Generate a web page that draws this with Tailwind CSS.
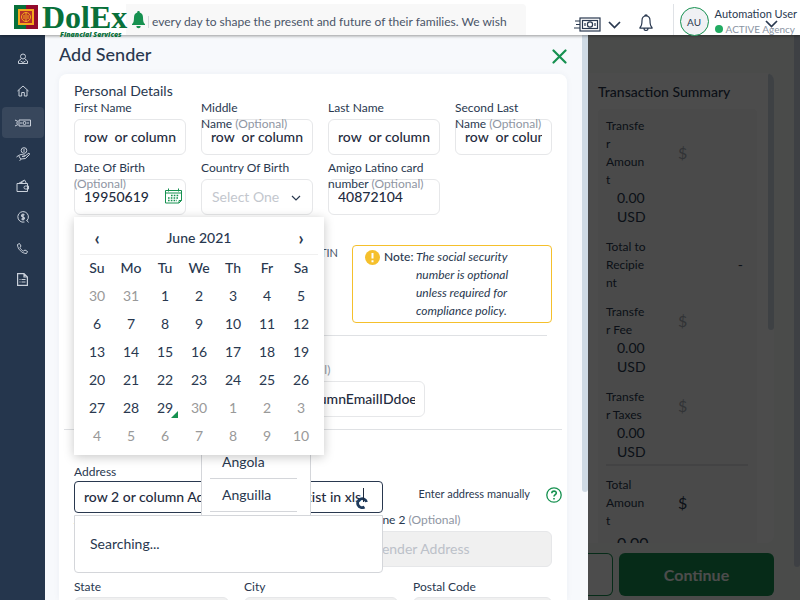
<!DOCTYPE html>
<html lang="en">
<head>
<meta charset="utf-8">
<meta name="viewport" content="width=device-width, initial-scale=1">
<title>Add Sender</title>
<script src="https://cdn.jsdelivr.net/npm/@tailwindcss/browser@4"></script>
</head>
<body class="flex h-screen flex-col overflow-hidden bg-[#f7f9fc] font-['Lato',sans-serif] text-[12px] leading-4 text-[#29384f]">

<header class="relative z-20 flex h-[35px] shrink-0 bg-white shadow-[0_1px_3px_rgba(0,0,0,0.4)]">
  <a href="#" class="relative ml-[14px] flex w-[112px] shrink-0 items-start pt-1" aria-label="DolEx Financial Services">
    <svg class="mt-px h-6 w-6 shrink-0" viewBox="0 0 24 24">
      <rect width="12" height="24" fill="#08703a"/><rect x="12" width="12" height="24" fill="#930b2c"/>
      <rect x="4" y="4" width="16" height="16" fill="#f5a81c"/><rect x="6" y="6" width="12" height="12" fill="#b5302a"/>
      <g fill="none" stroke="#f5a81c"><circle cx="12" cy="12" r="4.5"/><path d="M12 7v10M10 10v4M14 10v4"/></g>
    </svg>
    <span class="ml-[4px] mt-px font-['Liberation_Serif',serif] text-[32px] font-bold leading-6 text-[#08703a]">DolEx</span>
    <span class="absolute left-[46px] top-[30px] z-10 whitespace-nowrap font-['Open_Sans',sans-serif] text-[7px] font-extrabold italic leading-[10px] text-[#08703a]">Financial Services</span>
  </a>
  <div class="mt-1 flex w-[400px] items-center gap-[3px] rounded-tr bg-[#f8f8f8] pl-[6px]">
    <svg class="h-[18px] w-[13px] shrink-0" viewBox="0 0 13 18" fill="#169150"><path d="M6.500 0a1.200 1.200 0 0 1 1.200 1.500C10 2 11 4 11 6.500c0 4 .7 5.500 2 6.500v1H0v-1c1.300-1 2-2.500 2-6.500C2 4 3 2 5.300 1.500A1.200 1.200 0 0 1 6.500 0ZM4.300 15h4.400a2.200 2.200 0 0 1-4.400 0Z"/></svg>
    <p class="mt-1 whitespace-nowrap border-l border-[#d5d8dc] pl-[3px] text-[12px] leading-3 text-[#4a5568]">every day to shape the present and future of their families. We wish</p>
  </div>
  <div class="ml-auto flex items-stretch">
    <button class="flex items-center gap-[6px] pt-[14px]" aria-label="Quick send">
      <svg class="h-4 w-7" viewBox="0 0 28 16" fill="none" stroke="#29384f" stroke-width="1.200"><rect x="6" y="1" width="20" height="13"/><rect x="8.500" y="3.500" width="15" height="8"/><circle cx="16" cy="7.500" r="2.600" fill="#fff"/><path d="M1 4h5M2 7.500h4M0 11h6M11 6v3M21 6v3"/></svg>
      <svg class="h-3 w-[13px]" viewBox="0 0 13 12" fill="none" stroke="#29384f" stroke-width="1.700"><path d="m1 3 5.500 5.500L12 3"/></svg>
    </button>
    <button class="ml-[18px] pt-2" aria-label="Notifications">
      <svg class="h-[18px] w-[14px]" viewBox="0 0 14 18" fill="none" stroke="#29384f" stroke-width="1.200"><path d="M1 14.500c1.500-1.300 2-3 2-7C3 4.500 4.500 3 7 3s4 1.500 4 4.500c0 4 .500 5.700 2 7v.700H1ZM5.800 3a1.200 1.200 0 1 1 2.400 0M5 15.500a2 2 0 0 0 4 0"/></svg>
    </button>
    <div class="ml-5 mt-1 border-l border-[#dfe2e6]"></div>
    <button class="relative flex gap-[6px] pl-[6px] pr-[3px] pt-[7px] text-left">
      <span class="flex h-[29px] w-[29px] items-center justify-center rounded-full border border-[#169150] bg-[#f0f1f4] text-[10px]">AU</span>
      <span class="text-[11px] leading-[14px]">Automation User
        <span class="flex items-center gap-[3px] text-[10px] leading-4 text-[#8a94a3]"><i class="h-2 w-2 rounded-full bg-[#22ab62]"></i>ACTIVE Agency</span>
      </span>
      <svg class="absolute right-[22px] top-[18px] h-3 w-[13px]" viewBox="0 0 13 12" fill="none" stroke="#29384f" stroke-width="1.700"><path d="m1 3 5.500 5.500L12 3"/></svg>
    </button>
  </div>
</header>

<div class="grid min-h-0 flex-1 grid-cols-[45px_minmax(0,543fr)_minmax(0,212fr)] grid-rows-[minmax(0,1fr)]">
  <nav class="flex flex-col items-center bg-[#25364d] pt-2 text-[#c9d0da]" aria-label="Main">
    <a href="#" aria-label="Profile" class="flex h-8 w-[42px] items-center justify-center"><svg class="h-3 w-3" viewBox="0 0 12 12" fill="none" stroke="currentColor"><circle cx="6" cy="3.500" r="2.500"/><path d="M4 6 1.500 8v2.500h9V8L8 6M3.500 8 6 9.500 8.500 8"/></svg></a>
    <a href="#" aria-label="Home" class="flex h-8 w-[42px] items-center justify-center"><svg class="h-3 w-3" viewBox="0 0 12 12" fill="none" stroke="currentColor"><path d="m.500 6 5.500-5 5.500 5M2 5v6h2.700V7.500h2.600V11H10V5"/></svg></a>
    <a href="#" aria-label="Send money" class="flex h-[31px] w-[42px] items-center justify-center rounded bg-[#38475c]"><svg class="h-[10px] w-4" viewBox="0 0 16 10" fill="none" stroke="currentColor"><path d="M4 2h11.500v6H4ZM0 2l3 1.500M1 5h2M0 8l3-1.500"/><circle cx="9.500" cy="5" r="1.500"/><path d="M6 4v2M13 4v2"/></svg></a>
    <a href="#" aria-label="Payout" class="flex h-8 w-[42px] items-center justify-center"><svg class="h-[14px] w-[14px]" viewBox="0 0 14 14" fill="none" stroke="currentColor"><circle cx="8" cy="3.500" r="2.800"/><path d="M8 2v3M.500 10l2-1.500 2.500 4-1.500 1M2.500 8.500 5 7.500l4 .700-.500 1.500-2.500-.200M9 9l4-3 .500 1.500-4 4-4.500.500"/></svg></a>
    <a href="#" aria-label="Wallet" class="flex h-[31px] w-[42px] items-center justify-center"><svg class="h-[13px] w-[13px]" viewBox="0 0 13 13" fill="none" stroke="currentColor"><path d="M1 4.500h10.500v8H1ZM2.500 4.500l6-3.500 2 3.500M4.500 4 7.500 2.500"/><path d="M12.500 7H9.500a1.400 1.400 0 0 0 0 3h3Z"/></svg></a>
    <a href="#" aria-label="Rates" class="flex h-[31px] w-[42px] items-center justify-center"><svg class="h-3 w-3" viewBox="0 0 12 12" fill="none" stroke="currentColor"><path d="M10 9.500A5.300 5.300 0 1 0 7.500 11M9.500 9l2 2.500"/><path stroke-width="1.200" d="M7.500 4c-1-.800-3-.500-3 .700S7.500 6 7.500 7.200s-2 1.500-3 .600M6 2.500v7"/></svg></a>
    <a href="#" aria-label="Calls" class="flex h-8 w-[42px] items-center justify-center"><svg class="h-[11px] w-[11px]" viewBox="0 0 11 11" fill="none" stroke="currentColor"><path d="M2.500.500 4 3 3 4.500C3.500 6 5 7.500 6.500 8L8 7l2.500 1.500-1 2C5 10.500.500 6 .500 1.500Z"/></svg></a>
    <a href="#" aria-label="Reports" class="flex h-[31px] w-[42px] items-center justify-center"><svg class="h-[13px] w-[11px]" viewBox="0 0 11 13" fill="none" stroke="currentColor" stroke-width="1.200"><path d="M.600.600h6.400l3.400 3.400v8.400H.600ZM7 .600V4h3.400M2.500 6.500h1M4.500 6.500h4M2.500 9h1M4.500 9h4"/></svg></a>
  </nav>

  <main class="relative flex flex-col overflow-hidden pl-[14px] pr-[21px]">
    <div class="absolute right-0 top-0 h-[457px] w-[6px] rounded-b bg-[#cfdae4]"></div>
    <div class="flex h-[39px] shrink-0 items-center justify-between">
      <h1 class="pb-[2px] text-[18px] font-medium leading-6">Add Sender</h1>
      <button aria-label="Close"><svg class="mt-1 h-[15px] w-[15px]" viewBox="0 0 15 15" fill="none" stroke="#169150" stroke-width="2.200" stroke-linecap="round"><path d="m1.500 1.500 12 12M13.500 1.500l-12 12"/></svg></button>
    </div>
    <form class="min-h-0 flex-1 rounded-t-lg bg-white px-[15px] pt-2 shadow-[0_0_6px_rgba(40,60,90,0.05)]">
      <h2 class="text-[14px] leading-[17px]">Personal Details</h2>
      <div class="relative grid grid-cols-[repeat(3,minmax(0,112fr))_minmax(0,97fr)] gap-x-[15px] gap-y-1">
        <div><label for="fn" class="block h-5 pt-px">First Name</label><input id="fn" value="row  or column Name" class="block h-9 w-full rounded-md border border-[#e6e7e9] px-[9px] pb-[2px] text-[14px] font-medium text-[#1f2c40]"></div>
        <div><label for="mn" class="relative block h-5 pt-px">Middle<br>Name <span class="text-[#8f96a3]">(Optional)</span></label><input id="mn" value="row  or column Name" class="block h-9 w-full rounded-md border border-[#e6e7e9] px-[9px] pb-[2px] text-[14px] font-medium text-[#1f2c40]"></div>
        <div><label for="ln" class="block h-5 pt-px">Last Name</label><input id="ln" value="row  or column Name" class="block h-9 w-full rounded-md border border-[#e6e7e9] px-[9px] pb-[2px] text-[14px] font-medium text-[#1f2c40]"></div>
        <div><label for="sn" class="relative block h-5 pt-px">Second Last<br>Name <span class="text-[#8f96a3]">(Optional)</span></label><input id="sn" value="row  or column Name" class="block h-9 w-full rounded-md border border-[#e6e7e9] px-[9px] pb-[2px] text-[14px] font-medium text-[#1f2c40]"></div>
        <div class="relative"><label for="dob" class="relative block h-5 pt-px">Date Of Birth<br><span class="text-[#8f96a3]">(Optional)</span></label><input id="dob" value="19950619" class="block h-9 w-full rounded-md border border-[#e6e7e9] px-[9px] pb-[2px] text-[14px] font-medium text-[#1f2c40]">
          <svg class="absolute bottom-[11px] right-1 h-4 w-[17px]" viewBox="0 0 17 16" fill="none" stroke="#169150"><path d="M.500 2.500h16v10l-2.500 2.500H.500ZM.500 5h16M3.500.500v3M13.500.500v3M14 15v-2.500h2.500"/><path stroke-width="1.600" stroke-dasharray="1.600 1.200" d="M6 7.500h8M3 10h11M3 12.500h9"/></svg>
        </div>
        <div><label for="cob" class="block h-5 pt-px">Country Of Birth</label>
          <div class="relative"><select id="cob" class="block h-9 w-full appearance-none rounded-md border border-[#e6e7e9] bg-white px-[10px] text-[14px] text-[#c3c7ce]"><option>Select One</option></select>
          <svg class="pointer-events-none absolute right-3 top-4 h-[6px] w-[10px]" viewBox="0 0 10 6" fill="none" stroke="#29384f" stroke-width="1.200"><path d="m1 1 4 4 4-4"/></svg></div>
        </div>
        <div><label for="card" class="relative block h-5 whitespace-nowrap pt-px">Amigo Latino card<br>number <span class="text-[#8f96a3]">(Optional)</span></label><input id="card" value="40872104" class="block h-9 w-full rounded-md border border-[#e6e7e9] px-[9px] pb-[2px] text-[14px] font-medium text-[#1f2c40]"></div>

        <!-- Date picker -->
        <section class="absolute left-0 top-full z-10 mt-[2px] h-[238px] w-[250px] bg-white px-[6px] shadow-[0_2px_10px_rgba(0,0,0,0.22)]" aria-label="Calendar">
          <div class="flex h-[38px] items-center justify-between border-b border-[#f0f0f0] px-3 pt-1 text-[14px] font-medium">
            <button type="button" class="w-[10px] text-[18px] font-bold leading-4" aria-label="Previous month">‹</button><span>June 2021</span><button type="button" class="w-[10px] text-[18px] font-bold leading-4" aria-label="Next month">›</button>
          </div>
          <table class="-mt-px w-full table-fixed text-center text-[14px] leading-7">
            <thead><tr class="h-7"><th class="font-medium">Su</th><th class="font-medium">Mo</th><th class="font-medium">Tu</th><th class="font-medium">We</th><th class="font-medium">Th</th><th class="font-medium">Fr</th><th class="font-medium">Sa</th></tr></thead>
            <tbody>
              <tr><td class="text-[#999]">30</td><td class="text-[#999]">31</td><td>1</td><td>2</td><td>3</td><td>4</td><td>5</td></tr>
              <tr><td>6</td><td>7</td><td>8</td><td>9</td><td>10</td><td>11</td><td>12</td></tr>
              <tr><td>13</td><td>14</td><td>15</td><td>16</td><td>17</td><td>18</td><td>19</td></tr>
              <tr><td>20</td><td>21</td><td>22</td><td>23</td><td>24</td><td>25</td><td>26</td></tr>
              <tr><td>27</td><td>28</td><td class="relative">29<i class="absolute bottom-1 right-1 border-b-[7px] border-l-[7px] border-b-[#169150] border-l-transparent"></i></td><td class="text-[#999]">30</td><td class="text-[#999]">1</td><td class="text-[#999]">2</td><td class="text-[#999]">3</td></tr>
              <tr class="text-[#999]"><td>4</td><td>5</td><td>6</td><td>7</td><td>8</td><td>9</td><td>10</td></tr>
            </tbody>
          </table>
        </section>
        <!-- Country options -->
        <ul class="absolute left-[127px] top-full z-[5] mt-[2px] flex h-[299px] w-[110px] flex-col justify-end border border-t-0 border-[#d4d6da] bg-white pl-2 pr-[13px] pb-[3px] text-[14px]">
          <li class="h-[33px] border-b border-[#d4d6da] pl-3 leading-8">Angola</li>
          <li class="h-[33px] border-b border-[#d4d6da] pl-3 leading-8">Anguilla</li>
        </ul>
      </div>

      <div class="mt-[30px] flex justify-end gap-[14px]">
        <span class="text-[11px] text-[#4a5568]">TIN</span>
        <div class="flex h-[78px] w-[200px] gap-[4px] rounded-sm border border-[#f5c02c] pl-3 pt-[2px]">
          <svg class="mt-[2px] h-[15px] w-[15px] shrink-0" viewBox="0 0 15 15"><circle cx="7.500" cy="7.500" r="7.500" fill="#f5c02c"/><path d="M7.500 3v5.500M7.500 10.300v2" stroke="#fff" stroke-width="2"/></svg>
          <strong class="w-[28px] shrink-0 font-medium leading-[18px]">Note:</strong>
          <em class="w-[104px] shrink-0 leading-[18px]">The social security number is optional unless required for compliance policy.</em>
        </div>
      </div>
      <hr class="mr-[5px] mt-3 border-[#dfe1e4]">
      <div class="mt-[25px] pl-[170px] pr-[127px]"><label for="em" class="block h-5 pl-[3px] pt-px">Email <span class="text-[#8f96a3]">(Optional)</span></label><input id="em" value="row  or columnEmailIDdoesnotexist" class="block h-9 w-full rounded-md border border-[#e6e7e9] px-[9px] pb-[2px] text-[14px] font-medium text-[#1f2c40]"></div>
      <hr class="-mx-[10px] mt-3 border-[#dfe1e4]">

      <div class="relative mt-[33px]">
        <div class="flex items-end justify-between">
          <div class="w-[309px]"><label for="ad" class="block h-[18px] pt-px">Address</label><input id="ad" value="row 2 or column Address does not exist in xls" class="block h-8 w-full rounded border border-[#29384f] px-[9px] pb-[2px] text-[14px] font-medium text-[#1f2c40]"></div>
          <button type="button" class="-mr-[10px] flex items-center gap-4 pb-[10px] text-[11px]">Enter address manually
            <svg class="mt-[2px] h-4 w-4" viewBox="0 0 16 16" fill="none" stroke="#169150" stroke-width="1.300"><circle cx="8" cy="8" r="7.200"/><path stroke-width="1.600" d="M5.800 6.300c0-3 4.600-2.800 4.500-.200C10.300 7.800 8 7.600 8 9.600M8 11v1.500"/></svg>
          </button>
        </div>
        <svg class="absolute left-[281px] top-6 h-[22px] w-[14px]" viewBox="0 0 14 22" fill="none" stroke="#1f3b5c" stroke-width="2.800"><path d="M9.500 20A4.500 4.500 0 1 1 11.500 15"/><path stroke="#1f2c40" stroke-width="1" d="M8.500 1v14"/></svg>
        <div class="absolute left-0 top-[52px] z-[6] flex h-[58px] w-[309px] items-center rounded-b border border-[#d4d6da] bg-white pl-[15px] text-[14px]" role="status">Searching...</div>
        <div class="-mt-px grid grid-cols-[239fr_224fr] gap-x-[15px]">
          <div><label for="l1" class="block h-[19px]">Address Line 1</label><input id="l1" disabled placeholder="Sender Address" class="block h-9 w-full rounded-md border border-[#e6e7e9] bg-[#f0f0f0] px-[9px] pb-[2px] text-[14px] placeholder:text-[#bcc1c9]"></div>
          <div><label for="l2" class="block h-[19px]">Address Line 2 <span class="text-[#8f96a3]">(Optional)</span></label><input id="l2" disabled placeholder="Enter Sender Address" class="block h-9 w-full rounded-md border border-[#e6e7e9] bg-[#f0f0f0] px-[9px] pb-[2px] text-[14px] placeholder:text-[#bcc1c9]"></div>
        </div>
        <div class="mt-3 grid grid-cols-[155fr_154fr_139fr] gap-x-[15px]">
          <div><label for="st" class="block h-[18px]">State</label><input id="st" disabled class="block h-9 w-full rounded-md border border-[#e6e7e9] bg-[#f0f0f0]"></div>
          <div><label for="ci" class="block h-[18px]">City</label><input id="ci" disabled class="block h-9 w-full rounded-md border border-[#e6e7e9] bg-[#f0f0f0]"></div>
          <div><label for="pc" class="block h-[18px]">Postal Code</label><input id="pc" disabled class="block h-9 w-full rounded-md border border-[#e6e7e9] bg-[#f0f0f0]"></div>
        </div>
      </div>
    </form>
  </main>

  <aside class="relative flex flex-col overflow-hidden bg-[#f7fbf8] pr-[26px] pt-[38px]">
    <div class="absolute right-0 top-0 h-[532px] w-[6px] rounded-b bg-[#cfd8e4]"></div>
    <section class="relative h-[470px] shrink-0 overflow-hidden rounded-r-lg bg-white pl-[10px] pr-[17px] pt-[9px]">
      <div class="absolute right-0 top-0 h-[257px] w-[6px] rounded bg-[#cfdae4]"></div>
      <h2 class="whitespace-nowrap text-[14px] font-medium leading-5">Transaction Summary</h2>
      <div class="mt-[7px] rounded bg-[#f8f8f8] pl-2 pr-[9px] pt-2 text-[12px] leading-[18px]">
        <div class="flex items-center"><div class="w-10 wrap-break-word">Transfer Amount</div><span class="ml-8 text-[16px] opacity-40">$</span></div>
        <p class="-mt-px w-11 pl-[11px] text-[14px] leading-[19px]">0.00 USD</p>
        <div class="mt-3 flex items-center justify-between pr-[5px]"><div class="w-10 wrap-break-word">Total to Recipient</div><span class="text-[14px]">-</span></div>
        <div class="mt-[11px] flex items-center"><div class="w-10 wrap-break-word">Transfer Fee</div><span class="ml-8 text-[16px] opacity-40">$</span></div>
        <p class="-mt-px w-11 pl-[11px] text-[14px] leading-[19px]">0.00 USD</p>
        <div class="mt-3 flex items-center"><div class="w-10 wrap-break-word">Transfer Taxes</div><span class="ml-8 text-[16px] opacity-40">$</span></div>
        <p class="-mt-px w-11 pl-[11px] text-[14px] leading-[19px]">0.00 USD</p>
        <hr class="mt-[3px] border-t-2 border-[#dfe1e4]">
        <div class="mt-[10px] flex items-center"><div class="w-10 wrap-break-word">Total Amount</div><span class="ml-8 text-[16px]">$</span></div>
        <p class="h-10 pl-[11px] pt-[3px] text-[16px] leading-[19px]">0.00</p>
      </div>
    </section>
    <div class="mt-[10px] flex h-[43px] shrink-0 gap-[6px]">
      <button class="w-[25px] rounded-r-md border border-l-0 border-[#169150] bg-white" aria-label="Back"></button>
      <button class="flex-1 rounded-md bg-[#169150] text-[16px] font-bold text-white">Continue</button>
    </div>
    <div class="absolute inset-0 bg-black/70"></div>
  </aside>
</div>
</body>
</html>
